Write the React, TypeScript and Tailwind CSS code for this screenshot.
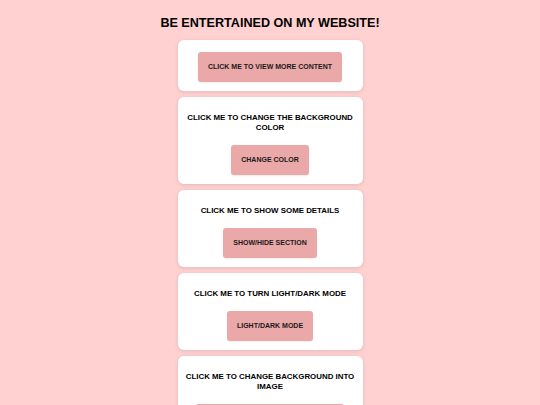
import React from 'react';

const cards = [
  { heading: '', button: 'CLICK ME TO VIEW MORE CONTENT' },
  { heading: 'CLICK ME TO CHANGE THE BACKGROUND COLOR', button: 'CHANGE COLOR' },
  { heading: 'CLICK ME TO SHOW SOME DETAILS', button: 'SHOW/HIDE SECTION' },
  { heading: 'CLICK ME TO TURN LIGHT/DARK MODE', button: 'LIGHT/DARK MODE' },
  { heading: 'CLICK ME TO CHANGE BACKGROUND INTO IMAGE', button: 'CHANGE BACKGROUND INTO IMAGE' },
];

export default function App() {
  return (
    <div className="min-h-screen bg-[#ffd1d1] font-['Liberation_Sans',Arial,sans-serif] text-black flex flex-col items-center pt-[15px] pb-6">
      <h1 className="text-[12.6px] leading-[16px] font-bold mb-[9px]">BE ENTERTAINED ON MY WEBSITE!</h1>
      <div className="flex flex-col gap-[6px] w-[185px]">
        {cards.map((c, i) => (
          <div
            key={i}
            className={`bg-white rounded-[6px] shadow-[0_1px_4px_rgba(0,0,0,0.12)] flex flex-col items-center px-[6px] pb-[9px] ${
              c.heading ? 'pt-4' : 'pt-3'
            }`}
          >
            {c.heading && (
              <h2 className="text-[7.9px] leading-[10px] font-bold text-center mb-3">{c.heading}</h2>
            )}
            <button className="bg-[#eaa8a8] rounded-[3px] h-[30px] px-[10px] text-[7px] font-bold text-[#1a1a1a] shadow-[0_1px_2px_rgba(0,0,0,0.08)]">
              {c.button}
            </button>
          </div>
        ))}
      </div>
    </div>
  );
}
